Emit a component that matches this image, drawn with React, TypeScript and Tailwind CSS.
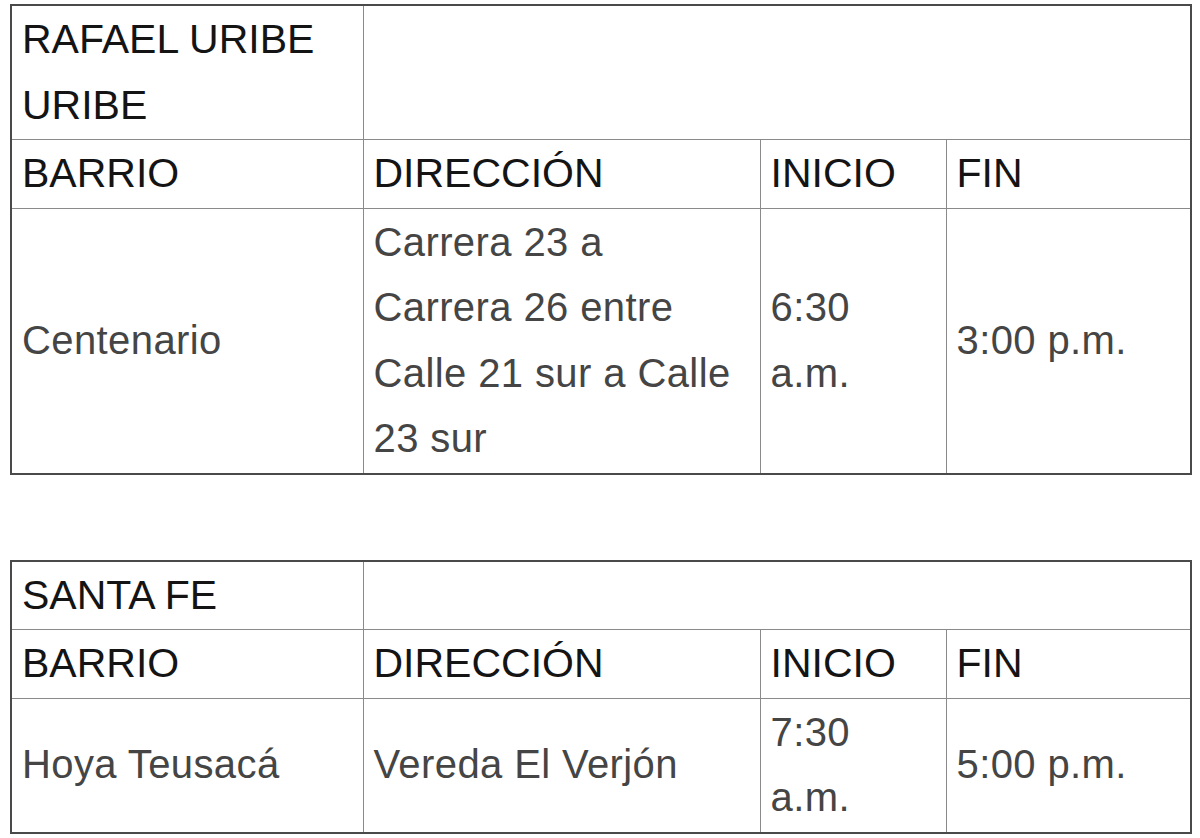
import React from "react";

const th = "border border-[#8a8a8a] px-[10px] py-[1px] text-left align-middle font-normal text-[#141414] text-[41px] leading-[65.5px]";
const td = "border border-[#8a8a8a] px-[10px] py-[1px] text-left align-middle text-[#454545] text-[40px] leading-[65.5px] tracking-[0.4px]";

function Cols() {
  return (
    <colgroup>
      <col className="w-[352px]" />
      <col className="w-[397px]" />
      <col className="w-[186px]" />
      <col className="w-[245px]" />
    </colgroup>
  );
}

export default function App() {
  return (
    <div
      className="w-[1200px] h-[838px] bg-white overflow-hidden pl-[10px] pt-[4px]"
      style={{ fontFamily: '"Liberation Sans", Arial, sans-serif' }}
    >
      <table className="table-fixed border-collapse w-[1180px] border-2 border-[#4a4a4a]">
        <Cols />
        <tbody>
          <tr>
            <td className={th}>
              RAFAEL URIBE
              <br />
              URIBE
            </td>
            <td className={th} colSpan={3}></td>
          </tr>
          <tr>
            <td className={th}>BARRIO</td>
            <td className={th}>DIRECCIÓN</td>
            <td className={th}>INICIO</td>
            <td className={th}>FIN</td>
          </tr>
          <tr>
            <td className={td}>Centenario</td>
            <td className={td}>
              Carrera 23 a
              <br />
              Carrera 26 entre
              <br />
              Calle 21 sur a Calle
              <br />
              23 sur
            </td>
            <td className={td}>
              6:30
              <br />
              a.m.
            </td>
            <td className={td}>3:00 p.m.</td>
          </tr>
        </tbody>
      </table>

      <table className="table-fixed border-collapse w-[1180px] border-2 border-[#4a4a4a] mt-[85px]">
        <Cols />
        <tbody>
          <tr>
            <td className={th}>SANTA FE</td>
            <td className={th} colSpan={3}></td>
          </tr>
          <tr>
            <td className={th}>BARRIO</td>
            <td className={th}>DIRECCIÓN</td>
            <td className={th}>INICIO</td>
            <td className={th}>FIN</td>
          </tr>
          <tr>
            <td className={td}>Hoya Teusacá</td>
            <td className={td}>Vereda El Verjón</td>
            <td className={td}>
              7:30
              <br />
              a.m.
            </td>
            <td className={td}>5:00 p.m.</td>
          </tr>
        </tbody>
      </table>
    </div>
  );
}
